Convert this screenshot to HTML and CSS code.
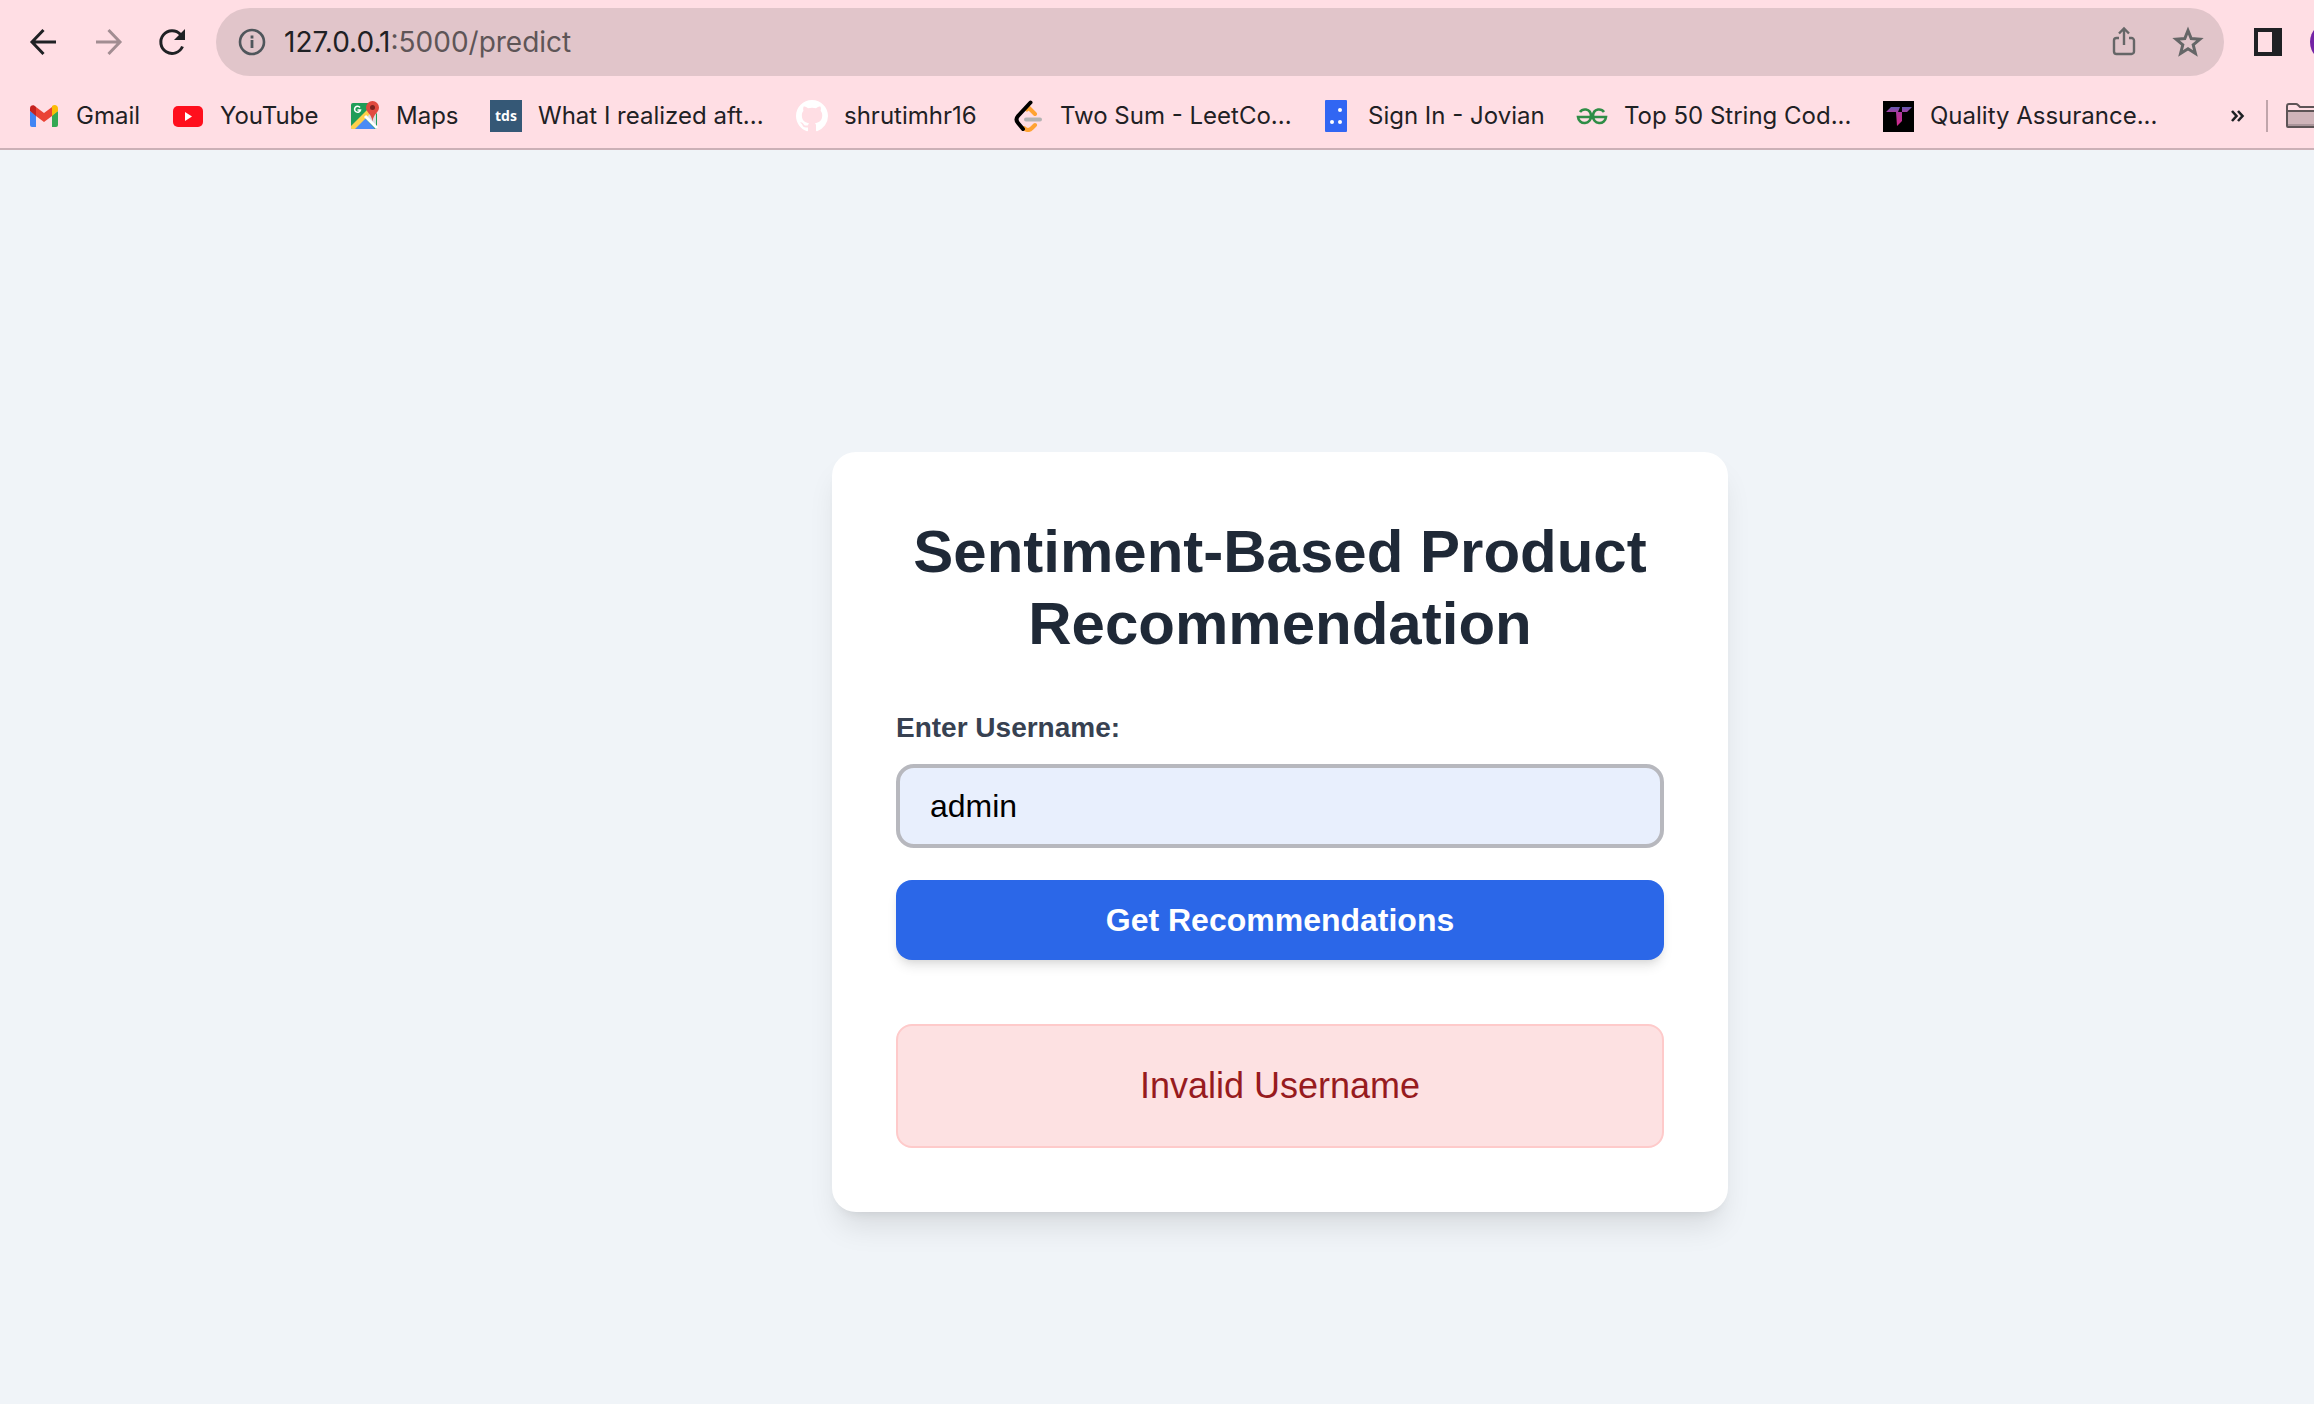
FILE: index.html
```html
<!DOCTYPE html>
<html lang="en">
<head>
<meta charset="utf-8">
<title>Sentiment-Based Product Recommendation</title>
<link rel="stylesheet" href="styles.css">
</head>
<body>
<header class="browser">
  <div class="toolbar">
    <nav class="nav" aria-label="History">
      <button class="tool" type="button" aria-label="Back"><svg class="icon" viewBox="0 0 32 32"><path d="M28 16H5M15.500 4L4 16l11.500 12" fill="none" stroke="#1f2124" stroke-width="3"/></svg></button>
      <button class="tool" type="button" aria-label="Forward"><svg class="icon" viewBox="0 0 32 32"><path d="M4 16h23M16.500 4L28 16 16.500 28" fill="none" stroke="#a28d92" stroke-width="3"/></svg></button>
      <button class="tool" type="button" aria-label="Reload"><svg class="icon" viewBox="0 0 32 32"><path d="M26.500 20.500A11.300 11.300 0 1 1 24.500 8.500" fill="none" stroke="#1f2124" stroke-width="3"/><path d="M29 3v11H18z" fill="#1f2124"/></svg></button>
    </nav>
    <div class="omnibox">
      <svg class="icon" viewBox="0 0 32 32"><circle cx="16" cy="16" r="12" fill="none" stroke="#4f565b" stroke-width="2.600"/><path d="M16 14v8M16 9.500v3" stroke="#4f565b" stroke-width="2.800"/></svg>
      <span class="url">127.0.0.1<span class="path">:5000/predict</span></span>
      <button class="tool" type="button" aria-label="Share"><svg class="icon" viewBox="0 0 32 32"><path d="M11 12H8.500A2.500 2.500 0 0 0 6 14.500v11A2.500 2.500 0 0 0 8.500 28h15a2.500 2.500 0 0 0 2.500-2.500v-11a2.500 2.500 0 0 0-2.500-2.500H21M16 19V3M11 7.500l5-5 5 5" fill="none" stroke="#656667" stroke-width="2.400"/></svg></button>
      <button class="tool" type="button" aria-label="Bookmark this page"><svg class="icon" viewBox="0 0 32 32"><path d="M16 4.500l3.200 8.100 8.700.700-6.700 5.600 2.200 8.500-7.400-4.700-7.400 4.700 2.200-8.500-6.700-5.600 8.700-.700z" fill="none" stroke="#656667" stroke-width="3"/></svg></button>
    </div>
    <button class="tool panel" type="button" aria-label="Side panel"><svg class="icon" viewBox="0 0 32 32"><path d="M2 2h28v28H2z" fill="#1f2124"/><path d="M6 6h14v20H6z" fill="#ffdee4"/></svg></button>
    <button class="avatar" type="button" aria-label="Profile"></button>
  </div>
  <nav class="bookmarks" aria-label="Bookmarks">
    <a class="bookmark" href="#"><svg class="icon" viewBox="0 0 32 32"><path d="M2 11v14a2 2 0 0 0 2 2h4V15z" fill="#4285f4"/><path d="M30 11v14a2 2 0 0 1-2 2h-4V15z" fill="#34a853"/><path d="M24 7v9l6-5V8.500C30 5 26.500 4 24 6z" fill="#fbbc04"/><path d="M8 7v9l8 6 8-6V7l-8 6z" fill="#ea4335"/><path d="M2 8.500V11l6 5V7C5.500 4 2 5.500 2 8.500z" fill="#c5221f"/></svg>Gmail</a>
    <a class="bookmark" href="#"><svg class="icon" viewBox="0 0 32 32"><rect x="1" y="6" width="30" height="21" rx="5" fill="#ff0f1d"/><path d="M13 12v9l7-4.500z" fill="#fff"/></svg>YouTube</a>
    <a class="bookmark" href="#"><svg class="icon" viewBox="0 0 32 32"><path d="M5 3h16L29 14v13a2 2 0 0 1-2 2H5a2 2 0 0 1-2-2V5a2 2 0 0 1 2-2z" fill="#1f9d58"/><path d="M16 16l12 12V12l-6-1z" fill="#dadce0"/><path d="M4 29l12-12 11 12z" fill="#4a8bf5"/><path d="M3 26L20 9l3 4L7 29H4l-1-1z" fill="#ffd04b"/><path d="M17 16l12 12" stroke="#fff" stroke-width="3"/><path d="M24.500 1a6.500 6.500 0 0 0-6.500 6.500c0 5 5.500 6 6.500 14 1-8 6.500-9 6.500-14A6.500 6.500 0 0 0 24.500 1z" fill="#e04a3f"/><circle cx="24.500" cy="7.500" r="2.500" fill="#7c2320"/><path d="M12 7.500A3 3 0 1 0 12.500 10H9.500" fill="none" stroke="#fff" stroke-width="1.500"/></svg>Maps</a>
    <a class="bookmark" href="#"><span class="tds">tds</span>What I realized aft...</a>
    <a class="bookmark" href="#"><svg class="icon" viewBox="0 0 16 16"><path fill="#fff" d="M8 0C3.580 0 0 3.580 0 8c0 3.540 2.290 6.530 5.470 7.590.4.070.55-.17.55-.38 0-.19-.01-.82-.01-1.490-2.010.37-2.530-.49-2.690-.94-.09-.23-.48-.94-.82-1.130-.28-.15-.68-.52-.01-.53.63-.01 1.080.58 1.230.82.72 1.210 1.870.87 2.330.66.07-.52.28-.87.51-1.070-1.780-.2-3.640-.89-3.640-3.950 0-.87.31-1.590.82-2.150-.08-.2-.36-1.020.08-2.120 0 0 .67-.21 2.200.82.64-.18 1.320-.27 2-.27s1.360.09 2 .27c1.530-1.040 2.200-.82 2.200-.82.44 1.100.16 1.920.08 2.120.51.56.82 1.270.82 2.150 0 3.070-1.870 3.750-3.650 3.950.29.25.54.73.54 1.480 0 1.070-.01 1.930-.01 2.200 0 .21.15.46.55.38A8.010 8.010 0 0 0 16 8c0-4.420-3.580-8-8-8z"/></svg>shrutimhr16</a>
    <a class="bookmark" href="#"><svg class="icon" viewBox="0 0 32 32"><g fill="none" stroke-linecap="round" stroke-width="4"><path d="M15 9.500l2-1.500 6 6M12 28q4 4 8 0l3-3" stroke="#ffa332"/><path d="M14 19.500h14" stroke="#b3b3b3"/><path d="M18.500 2.500L6 16q-3 3.500 0 7l5 6" stroke="#000"/></g></svg>Two Sum - LeetCo...</a>
    <a class="bookmark" href="#"><svg class="icon" viewBox="0 0 32 32"><rect x="5" width="22" height="32" rx="1" fill="#3166f3"/><g fill="#fff"><circle cx="20" cy="10" r="2"/><circle cx="12" cy="22" r="2"/><circle cx="20" cy="22" r="2"/></g></svg>Sign In - Jovian</a>
    <a class="bookmark" href="#"><svg class="icon" viewBox="0 0 32 32"><path d="M4 12q2-3 6-2.500 5 1 5 6.500a6.500 6.500 0 0 1-13 1h28a6.500 6.500 0 0 1-13-1q0-5.500 5-6.500 4-.500 6 2.500" fill="none" stroke="#2f8d46" stroke-width="2.600"/></svg>Top 50 String Cod...</a>
    <a class="bookmark" href="#"><svg class="icon" viewBox="0 0 32 32"><defs><linearGradient id="t" gradientUnits="userSpaceOnUse" x1="0" y1="6" x2="0" y2="26"><stop stop-color="#5560b4"/><stop offset=".35" stop-color="#b0389e"/><stop offset="1" stop-color="#d32a8a"/></linearGradient></defs><path d="M1 1h31v31H1z"/><path d="M9 7h9l-2 5H4zM20 7h10l-5 5h-5zM14 12h6v9l-5 5z" fill="url(#t)"/></svg>Quality Assurance...</a>
    <button class="more" type="button" aria-label="More bookmarks"><svg class="chevrons" viewBox="0 0 16 16"><path d="M2 3l4.500 5L2 13M8 3l4.500 5L8 13" fill="none" stroke="#1f2124" stroke-width="2.600"/></svg></button>
    <button class="folder" type="button" aria-label="All bookmarks"><svg class="icon" viewBox="0 0 32 32"><path d="M1 27V6q0-2 2-2h8l3 3h22v20q0 1-1 1H2q-1 0-1-1z" fill="#ffdee4"/><path d="M1 11h36v16H1z" fill="#cfb4b9"/><path d="M2 24h34v3H2z" fill="#aa959a"/><path d="M34 11H1v15q0 1 1 1h32M1 12V6q0-2 2-2h7q1 0 2 1l2 2h20" fill="none" stroke="#5d5456" stroke-width="2"/></svg></button>
  </nav>
</header>
<main class="page">
  <section class="card">
    <h1 class="title">Sentiment-Based Product Recommendation</h1>
    <form class="form">
      <label class="label" for="username">Enter Username:</label>
      <input class="input" id="username" type="text" value="admin">
      <button class="submit" type="button">Get Recommendations</button>
    </form>
    <p class="alert" role="alert">Invalid Username</p>
  </section>
</main>
</body>
</html>
```
FILE: styles.css
```css
*, *::before, *::after { box-sizing: border-box; }

body {
  margin: 0;
  min-height: 100vh;
  overflow-x: hidden;
  background: #f0f4f8;
  font-family: "Liberation Sans", Arial, sans-serif;
}

button, input { font: inherit; }
button { padding: 0; border: 0; background: none; }
svg { display: block; }
.icon { width: 32px; height: 32px; flex: none; }

/* Browser chrome */
.browser {
  overflow: hidden;
  background: #ffdee4;
  border-bottom: 2px solid #cbb0b6;
  font-family: Inter, sans-serif;
  color: #1f2124;
}

.toolbar {
  display: flex;
  align-items: center;
  padding: 8px 0 8px 28px;
}

.nav { display: flex; gap: 32px; margin-right: 28px; }
.tool { flex: none; }

.omnibox {
  flex: 1;
  display: flex;
  align-items: center;
  height: 68px;
  padding: 0 20px;
  border-radius: 34px;
  background: #e1c5ca;
}
.url {
  flex: 1;
  margin-left: 16px;
  font-size: 28px;
}
.path { color: #5e5557; }
.omnibox .tool + .tool { margin-left: 32px; }
.panel { margin: 0 26px 0 28px; }
.avatar {
  flex: none;
  width: 40px;
  height: 40px;
  margin-right: -36px;
  border-radius: 50%;
  background: #7423a5;
}

.bookmarks {
  display: grid;
  grid-template-columns: 144px 176px 142px 306px 216px 308px 256px 306px 1fr auto auto;
  align-items: center;
  padding: 16px 0 16px 28px;
}
.bookmark {
  display: flex;
  align-items: center;
  gap: 16px;
  color: inherit;
  font-size: 24px;
  line-height: 32px;
  white-space: nowrap;
  text-decoration: none;
}
.tds {
  width: 32px;
  background: #355876;
  color: #fff;
  font: bold 14px/32px "Open Sans", sans-serif;
  text-align: center;
}
.chevrons { width: 16px; height: 16px; }
.folder {
  width: 48px;
  margin-left: 20px;
  padding-left: 18px;
  border-left: 2px solid #c0a5ab;
}

/* Recommendation page */
.page { padding: 302px 0 64px 246px; }

.card {
  width: 896px;
  max-width: 100%;
  margin: 0 auto;
  padding: 64px;
  border-radius: 24px;
  background: #fff;
  box-shadow: 0 20px 30px -6px rgb(0 0 0 / 10%), 0 8px 12px -8px rgb(0 0 0 / 10%);
}

.title {
  margin: 0 0 48px;
  color: #1f2937;
  font-size: 60px;
  line-height: 72px;
  text-align: center;
}

.form { display: flex; flex-direction: column; }
.label {
  margin-bottom: 16px;
  color: #374151;
  font-size: 28px;
  font-weight: bold;
  line-height: 40px;
}
.input {
  height: 84px;
  margin-bottom: 32px;
  padding: 0 30px;
  border: 4px solid #b7b8be;
  border-radius: 18px;
  background: #e8effd;
  color: #000;
  font-size: 32px;
}
.submit {
  height: 80px;
  border-radius: 16px;
  background: #2b67e8;
  box-shadow: 0 8px 12px -2px rgb(0 0 0 / 10%), 0 4px 8px -4px rgb(0 0 0 / 10%);
  color: #fff;
  font-size: 32px;
  font-weight: bold;
}

.alert {
  margin: 64px 0 0;
  padding: 32px;
  border: 2px solid #fecaca;
  border-radius: 16px;
  background: #fde1e2;
  color: #971b1e;
  font-size: 36px;
  line-height: 56px;
  text-align: center;
}
```
